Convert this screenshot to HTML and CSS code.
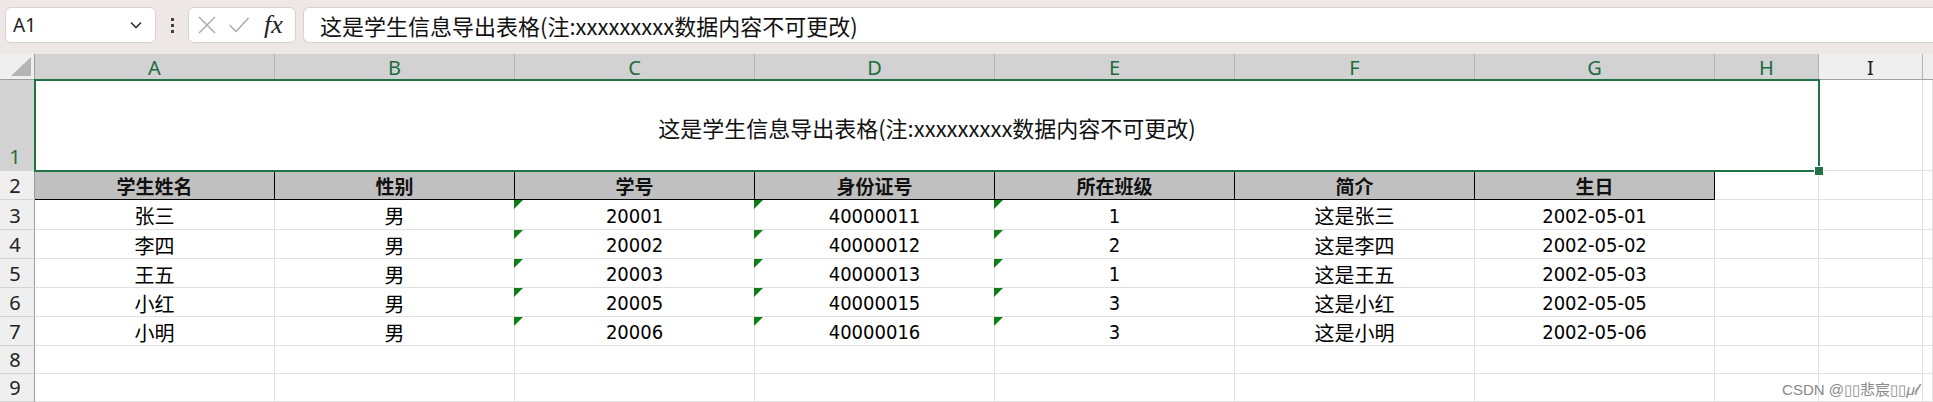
FILE: index.html
```html
<!DOCTYPE html>
<html lang="zh">
<head>
<meta charset="utf-8">
<title>Sheet</title>
<link rel="stylesheet" href="styles.css">
</head>
<body>
<div class="app">
  <div class="topbar">
    <div class="namebox"><span class="ref">A1</span>
      <svg class="chev" width="14" height="10" viewBox="0 0 14 10"><path d="M2 2.5 L7 7.5 L12 2.5" fill="none" stroke="#333" stroke-width="1.6"/></svg>
    </div>
    <div class="dots"><i></i><i></i><i></i></div>
    <div class="fbtns">
      <svg width="20" height="20" viewBox="0 0 20 20"><path d="M2 2 L18 18 M18 2 L2 18" stroke="#a8a8a8" stroke-width="1.4" fill="none"/></svg>
      <svg width="22" height="20" viewBox="0 0 22 20"><path d="M1.5 10 L8 16.5 L20.5 3" stroke="#a8a8a8" stroke-width="1.4" fill="none"/></svg>
      <span class="fx">fx</span>
    </div>
    <div class="finput">这是学生信息导出表格(注:xxxxxxxxx数据内容不可更改)</div>
  </div>

  <div class="sheet">
    <div class="corner"><span class="tri"></span></div>
    <div class="ch sel">A</div>
    <div class="ch sel">B</div>
    <div class="ch sel">C</div>
    <div class="ch sel">D</div>
    <div class="ch sel">E</div>
    <div class="ch sel">F</div>
    <div class="ch sel">G</div>
    <div class="ch sel">H</div>
    <div class="ch">I</div>
    <div class="ch rest"></div>

    <div class="rh sel">1</div>
    <div class="title">这是学生信息导出表格(注:xxxxxxxxx数据内容不可更改)</div>
    <div class="c"></div>
    <div class="c"></div>

    <div class="rh">2</div>
    <div class="hd">学生姓名</div>
    <div class="hd">性别</div>
    <div class="hd">学号</div>
    <div class="hd">身份证号</div>
    <div class="hd">所在班级</div>
    <div class="hd">简介</div>
    <div class="hd">生日</div>
    <div class="c"></div>
    <div class="c"></div>
    <div class="c"></div>

    <div class="rh">3</div>
    <div class="c cjk">张三</div>
    <div class="c cjk">男</div>
    <div class="c num txt">20001</div>
    <div class="c num txt">40000011</div>
    <div class="c num txt">1</div>
    <div class="c cjk">这是张三</div>
    <div class="c num">2002-05-01</div>
    <div class="c"></div>
    <div class="c"></div>
    <div class="c"></div>

    <div class="rh">4</div>
    <div class="c cjk">李四</div>
    <div class="c cjk">男</div>
    <div class="c num txt">20002</div>
    <div class="c num txt">40000012</div>
    <div class="c num txt">2</div>
    <div class="c cjk">这是李四</div>
    <div class="c num">2002-05-02</div>
    <div class="c"></div>
    <div class="c"></div>
    <div class="c"></div>

    <div class="rh">5</div>
    <div class="c cjk">王五</div>
    <div class="c cjk">男</div>
    <div class="c num txt">20003</div>
    <div class="c num txt">40000013</div>
    <div class="c num txt">1</div>
    <div class="c cjk">这是王五</div>
    <div class="c num">2002-05-03</div>
    <div class="c"></div>
    <div class="c"></div>
    <div class="c"></div>

    <div class="rh">6</div>
    <div class="c cjk">小红</div>
    <div class="c cjk">男</div>
    <div class="c num txt">20005</div>
    <div class="c num txt">40000015</div>
    <div class="c num txt">3</div>
    <div class="c cjk">这是小红</div>
    <div class="c num">2002-05-05</div>
    <div class="c"></div>
    <div class="c"></div>
    <div class="c"></div>

    <div class="rh">7</div>
    <div class="c cjk">小明</div>
    <div class="c cjk">男</div>
    <div class="c num txt">20006</div>
    <div class="c num txt">40000016</div>
    <div class="c num txt">3</div>
    <div class="c cjk">这是小明</div>
    <div class="c num">2002-05-06</div>
    <div class="c"></div>
    <div class="c"></div>
    <div class="c"></div>

    <div class="rh">8</div>
    <div class="c"></div><div class="c"></div><div class="c"></div><div class="c"></div><div class="c"></div>
    <div class="c"></div><div class="c"></div><div class="c"></div><div class="c"></div><div class="c"></div>

    <div class="rh">9</div>
    <div class="c"></div><div class="c"></div><div class="c"></div><div class="c"></div><div class="c"></div>
    <div class="c"></div><div class="c"></div><div class="c"></div><div class="c"></div><div class="c"></div>
  </div>
  <div class="watermark">CSDN @▯▯悲宸▯▯𝜇𝓁</div>
</div>
</body>
</html>
```

FILE: styles.css
```css
* { box-sizing: border-box; }
html, body { margin: 0; padding: 0; background: #fff; overflow: hidden; }
.app { position: relative; width: 1933px; height: 402px; overflow: hidden; font-family: "Noto Sans CJK SC", "Noto Sans", sans-serif; }

.topbar {
  height: 54px;
  background: #ede7e5;
  display: flex;
  align-items: flex-start;
  padding: 7px 0 0 5px;
}
.namebox {
  width: 151px; height: 36px;
  background: #fff;
  border: 1px solid #d7d1cf;
  border-radius: 6px;
  display: flex; align-items: center; justify-content: space-between;
  padding: 0 12px 0 7px;
}
.ref { font-family: "Noto Sans", sans-serif; font-size: 19px; color: #222; }
.dots { width: 32px; height: 36px; display: flex; flex-direction: column; align-items: center; justify-content: center; gap: 3px; }
.dots i { display: block; width: 3px; height: 3px; background: #444; }
.fbtns {
  width: 108px; height: 36px;
  background: #fff;
  border: 1px solid #d7d1cf;
  border-radius: 6px;
  display: flex; align-items: center;
  padding: 0 0 0 8px; gap: 11px;
}
.fx { font-family: "Liberation Serif", serif; font-style: italic; font-size: 26px; color: #222; margin-left: 3px; line-height: 1; }
.finput {
  flex: 1;
  margin-left: 7px;
  height: 36px;
  background: #fff;
  border: 1px solid #d7d1cf;
  border-right: none;
  border-radius: 6px 0 0 6px;
  font-size: 22px;
  line-height: 34px;
  padding-left: 16px;
  color: #111;
  white-space: nowrap;
}

.sheet {
  display: grid;
  grid-template-columns: 35px repeat(7, 240px) 104px 104px 1fr;
  grid-template-rows: 26px 91px 29px 30px 29px 29px 29px 29px 28px 28px;
}
.corner {
  background: #efefef;
  border-right: 1px solid #9e9e9e;
  border-bottom: 1px solid #9e9e9e;
  position: relative;
}
.corner .tri {
  position: absolute; right: 3px; bottom: 3px;
  width: 0; height: 0;
  border-left: 20px solid transparent;
  border-bottom: 19px solid #b4b4b4;
}
.ch {
  background: #efefef;
  border-right: 1px solid #b4b4b4;
  border-bottom: 1px solid #9e9e9e;
  font-family: "Noto Sans", sans-serif;
  font-size: 20px;
  color: #222;
  display: flex; align-items: center; justify-content: center;
  padding-top: 2px;
}
.ch.sel { background: #d2d2d2; color: #1d6b41; }
.ch.rest { border-right: none; }

.rh {
  background: #efefef;
  border-right: 1px solid #9e9e9e;
  border-bottom: 1px solid #d4d4d4;
  font-family: "Noto Sans", sans-serif;
  font-size: 20px;
  color: #222;
  display: flex; align-items: flex-end; justify-content: center;
  padding: 0 4px 1px 0;
  line-height: 25px;
}
.rh.sel { background: #d2d2d2; color: #1d6b41; }

.c {
  border-right: 1px solid #e1e1e1;
  border-bottom: 1px solid #e1e1e1;
  display: flex; align-items: center; justify-content: center;
  color: #000;
  white-space: nowrap;
  position: relative;
}
.cjk { font-size: 20px; padding-top: 2px; }
.num { font-family: "Liberation Sans Narrow", "DejaVu Sans Condensed", "Liberation Sans", sans-serif; font-size: 20px; padding-top: 2px; }
.txt::before {
  content: "";
  position: absolute; top: 0; left: -1px;
  width: 0; height: 0;
  border-top: 9px solid #0f7f14;
  border-right: 9px solid transparent;
}

.title {
  grid-column: 2 / span 8;
  position: relative;
  display: flex; align-items: center; justify-content: center;
  font-size: 22px;
  color: #111;
  white-space: nowrap;
  padding-top: 2px;
}
.title::after {
  content: "";
  position: absolute; top: -1px; left: -1px; right: -1px; bottom: -1px;
  border: 2px solid #217346;
  pointer-events: none;
}
.title::before {
  content: "";
  position: absolute; right: -5px; bottom: -5px;
  width: 8px; height: 8px;
  background: #217346;
  border: 1px solid #fff;
  z-index: 2;
}

.hd {
  background: #c0c0c0;
  border-right: 1px solid #000;
  border-bottom: 1px solid #000;
  display: flex; align-items: center; justify-content: center;
  font-size: 19px;
  font-weight: 700;
  color: #111;
  padding-top: 1px;
}

.watermark {
  position: absolute; right: 14px; bottom: 3px;
  font-family: "Liberation Sans", "Noto Sans CJK SC", sans-serif;
  font-size: 15px;
  color: #8a8a8a;
}
```
